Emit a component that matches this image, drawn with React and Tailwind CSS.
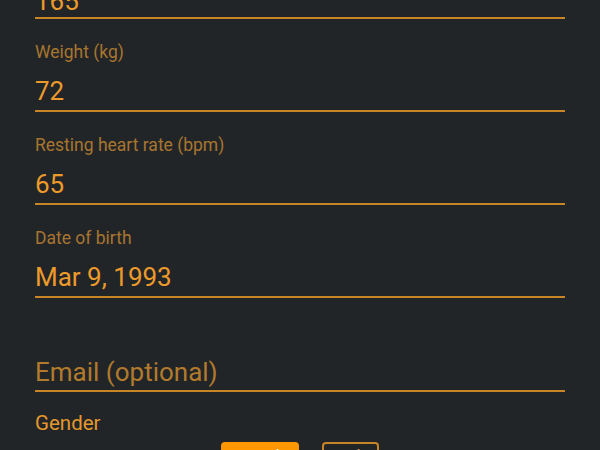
export default function App() {
  const fields = [
    { label: "Weight (kg)", value: "72" },
    { label: "Resting heart rate (bpm)", value: "65" },
    { label: "Date of birth", value: "Mar 9, 1993" },
  ];
  return (
    <div
      className="w-[600px] h-[450px] overflow-hidden bg-[#222528] px-[35px]"
      style={{ fontFamily: "Roboto, 'Noto Sans', sans-serif" }}
    >
      <div className="-mt-[14px]">
        <div className="text-[26px] leading-[30px] text-[#ec9a2a] pb-[1px] border-b-2 border-[#c78526]">165</div>
        {fields.map((f) => (
          <div key={f.label} className="mt-[23px]">
            <div className="text-[17.5px] leading-[20px] text-[#a8752f]">{f.label}</div>
            <div className="mt-[14px] text-[26px] leading-[30px] text-[#ec9a2a] pb-[4px] border-b-2 border-[#c78526]">
              {f.value}
            </div>
          </div>
        ))}
        <div className="mt-[59px] text-[26px] leading-[30px] text-[#b17a2c] pb-[3px] border-b-2 border-[#c78526]">
          Email (optional)
        </div>
        <div className="mt-[19px] text-[20.5px] leading-[24px] text-[#e3972c]">Gender</div>
        <div className="mt-[7px] flex gap-[23px] pl-[186px]">
          <div className="h-[30px] w-[78px] rounded-[4px] bg-[#ff9800] text-white text-[18px] leading-[20px] pt-[5px] text-center">Female</div>
          <div className="h-[30px] w-[57px] rounded-[4px] border-2 border-[#c78526] text-[#e3972c] text-[18px] leading-[20px] pt-[3px] text-center">Male</div>
        </div>
      </div>
    </div>
  );
}
